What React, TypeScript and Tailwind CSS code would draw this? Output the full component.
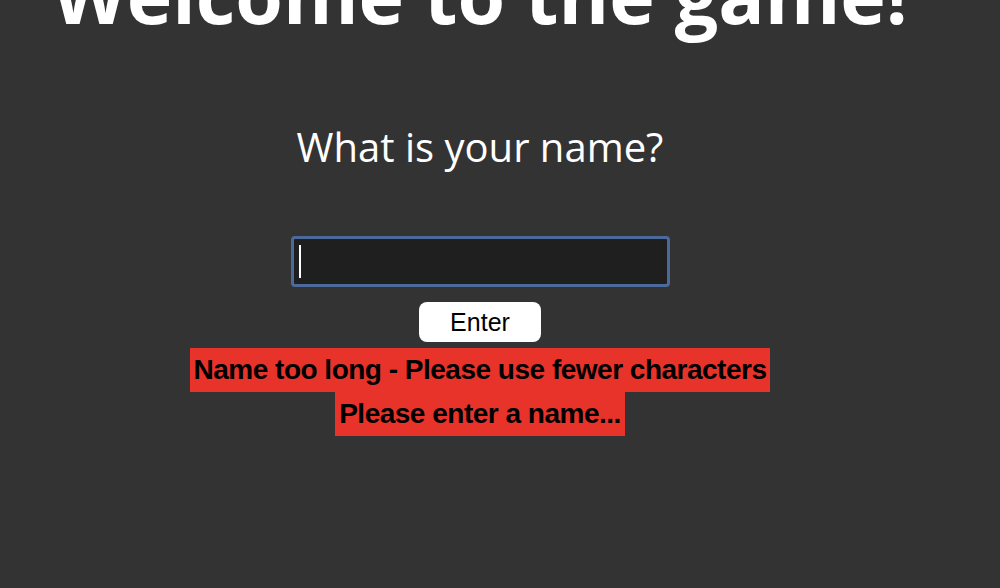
export default function App() {
  return (
    <div className="min-h-[588px] w-full overflow-hidden bg-[#333333]">
      <div className="w-[960px] flex flex-col items-center">
        <h1
          className="mt-[-55px] h-[85px] text-[77px] leading-[100px] font-bold text-white whitespace-nowrap"
          style={{ fontFamily: '"Open Sans", sans-serif' }}
        >
          Welcome to the game!
        </h1>
        <h2
          className="mt-[95px] text-[40px] leading-[44px] text-white"
          style={{ fontFamily: '"Open Sans", sans-serif' }}
        >
          What is your name?
        </h2>
        <div className="mt-[67px] w-[379px] h-[51px] rounded-[4px] border-[3px] border-[#4b6a9b] bg-[#1f1f1f] flex items-center pl-[5px]">
          <span className="block w-[2px] h-[33px] bg-white" />
        </div>
        <button
          type="button"
          className="mt-[15px] w-[122px] h-[40px] rounded-[8px] bg-white text-black text-[25px] leading-none"
          style={{ fontFamily: '"Liberation Sans", Arial, sans-serif' }}
        >
          Enter
        </button>
        <div
          className="mt-[6px] flex flex-col items-center text-black font-bold"
          style={{ fontFamily: '"Liberation Sans", Arial, sans-serif' }}
        >
          <p className="h-[44px] bg-[#e8332a] px-[4px] text-[28px] leading-[44px] tracking-[-0.5px] whitespace-nowrap">
            Name too long - Please use fewer characters
          </p>
          <p className="h-[44px] bg-[#e8332a] px-[4px] text-[28px] leading-[44px] tracking-[-0.5px] whitespace-nowrap">
            Please enter a name...
          </p>
        </div>
      </div>
    </div>
  );
}
